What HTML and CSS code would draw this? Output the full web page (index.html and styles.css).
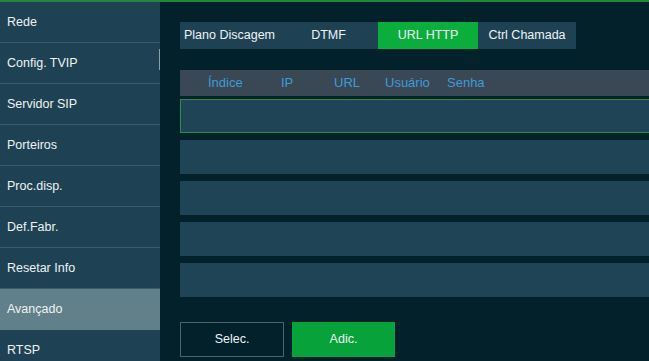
FILE: index.html
```html
<!DOCTYPE html>
<html>
<head>
<meta charset="utf-8">
<link rel="stylesheet" href="styles.css">
</head>
<body>
<div class="topline"></div>
<div class="app">
  <nav class="sidebar">
    <div class="item">Rede</div>
    <div class="item">Config. TVIP</div>
    <div class="item">Servidor SIP</div>
    <div class="item">Porteiros</div>
    <div class="item">Proc.disp.</div>
    <div class="item">Def.Fabr.</div>
    <div class="item">Resetar Info</div>
    <div class="item active">Avançado</div>
    <div class="item">RTSP</div>
    <div class="thumb"></div>
  </nav>
  <main class="main">
    <div class="tabs">
      <div class="tab">Plano Discagem</div>
      <div class="tab">DTMF</div>
      <div class="tab on">URL HTTP</div>
      <div class="tab">Ctrl Chamada</div>
    </div>
    <div class="thead">
      <span class="c1">Índice</span>
      <span class="c2">IP</span>
      <span class="c3">URL</span>
      <span class="c4">Usuário</span>
      <span class="c5">Senha</span>
    </div>
    <div class="rows">
      <div class="row sel"></div>
      <div class="row"></div>
      <div class="row"></div>
      <div class="row"></div>
      <div class="row"></div>
    </div>
    <div class="buttons">
      <div class="btn outline">Selec.</div>
      <div class="btn green">Adic.</div>
    </div>
  </main>
</div>
</body>
</html>
```
FILE: styles.css
```css
html, body {
  margin: 0;
  padding: 0;
  background: #03212b;
  width: 649px;
  height: 361px;
  overflow: hidden;
  font-family: "Liberation Sans", Arial, sans-serif;
  font-size: 12.5px;
  color: #eef3f5;
}
.topline {
  height: 2px;
  background: #22863f;
}
.app {
  display: flex;
  height: 359px;
}
.sidebar {
  position: relative;
  width: 160px;
  flex: none;
  background: #1e4253;
  overflow: hidden;
}
.item {
  height: 40px;
  line-height: 40px;
  padding-left: 7px;
  border-bottom: 1px solid #3a5d6c;
}
.item.active {
  background: #62808a;
  border-bottom-color: #62808a;
}
.thumb {
  position: absolute;
  right: 0;
  top: 47px;
  width: 1px;
  height: 21px;
  background: #8aa0a8;
}
.main {
  flex: 1;
  padding: 20px 0 0 20px;
  min-width: 0;
}
.tabs {
  display: flex;
  height: 27px;
}
.tab {
  width: 99px;
  background: #1e4253;
  text-align: center;
  line-height: 27px;
  white-space: nowrap;
}
.tab:nth-child(3) { width: 100px; }
.tab:nth-child(4) { width: 98px; }
.tab.on {
  background: #0bae3d;
}
.thead {
  margin-top: 21px;
  height: 26px;
  background: #3a4754;
  display: flex;
  line-height: 25px;
  font-size: 13px;
  color: #3d9cd9;
  padding-left: 28px;
}
.c1 { width: 73px; }
.c2 { width: 53px; }
.c3 { width: 51px; }
.c4 { width: 62px; }
.rows {
  margin-top: 3px;
  display: flex;
  flex-direction: column;
  gap: 7px;
}
.row {
  height: 34px;
  background: #1f4456;
  box-sizing: border-box;
}
.row.sel {
  border: 1px solid #2a8d4b;
  border-right: none;
}
.buttons {
  margin-top: 25px;
  display: flex;
  gap: 8px;
}
.btn {
  width: 104px;
  height: 35px;
  box-sizing: border-box;
  text-align: center;
  line-height: 35px;
}
.btn.outline {
  border: 1px solid #4b6570;
  line-height: 33px;
}
.btn.green {
  width: 103px;
  background: #07a33a;
}
```
